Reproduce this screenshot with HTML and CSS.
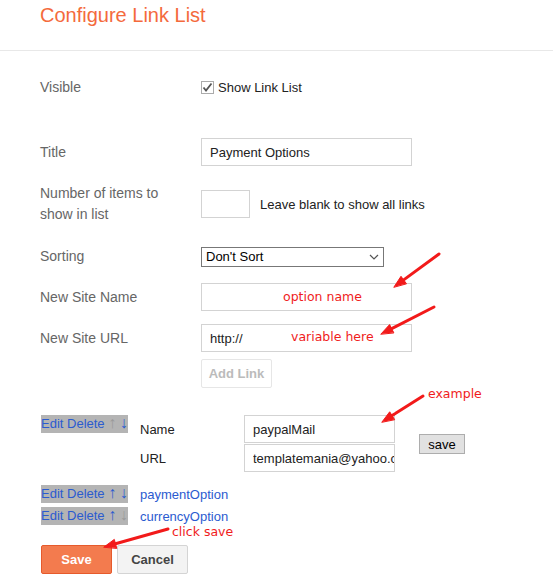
FILE: index.html
```html
<!DOCTYPE html>
<html lang="en">
<head>
    <meta charset="UTF-8" />
    <meta name="viewport" content="width=device-width, initial-scale=1.0"/>
    <title>Configure Link List</title>
    <link rel="stylesheet" href="styles.css">
</head>
<body>
<div class="page">
    <div class="head">
        <h1>Configure Link List</h1>
    </div>

    <div class="form">
        <div class="row row-visible">
            <div class="label">Visible</div>
            <label class="check">
                <span class="box">
                    <svg width="11" height="11" viewBox="0 0 11 11"><path d="M1.5 5.5 L4 8.5 L9.5 1.5" fill="none" stroke="#555" stroke-width="1.8"/></svg>
                </span>
                Show Link List
            </label>
        </div>

        <div class="row row-title">
            <div class="label">Title</div>
            <input type="text" class="field wide" value="Payment Options">
        </div>

        <div class="row row-count">
            <div class="label">Number of items to<br>show in list</div>
            <input type="text" class="field tiny">
            <span class="hint">Leave blank to show all links</span>
        </div>

        <div class="row row-sort">
            <div class="label">Sorting</div>
            <div class="select">
                <span>Don't Sort</span>
                <svg width="10" height="6" viewBox="0 0 10 6"><path d="M1 1 L5 5 L9 1" fill="none" stroke="#555" stroke-width="1.2"/></svg>
            </div>
        </div>

        <div class="row row-name">
            <div class="label">New Site Name</div>
            <input type="text" class="field wide">
        </div>

        <div class="row row-url">
            <div class="label">New Site URL</div>
            <input type="text" class="field wide" value="http://">
        </div>

        <button class="add">Add Link</button>

        <div class="links">
            <div class="link">
                <div class="acts"><span class="sel">Edit Delete <span class="arr dim">↑</span> <span class="arr">↓</span></span></div>
                <div class="fields">
                    <span>Name</span>
                    <input type="text" class="field mid" value="paypalMail">
                    <span>URL</span>
                    <input type="text" class="field mid" value="templatemania@yahoo.com">
                </div>
                <button class="mini">save</button>
            </div>
            <div class="link simple">
                <div class="acts"><span class="sel">Edit Delete <span class="arr">↑</span> <span class="arr">↓</span></span></div>
                <span class="name">paymentOption</span>
            </div>
            <div class="link simple tight">
                <div class="acts"><span class="sel">Edit Delete <span class="arr">↑</span> <span class="arr dim">↓</span></span></div>
                <span class="name">currencyOption</span>
            </div>
        </div>

        <div class="buttons">
            <button class="btn btn-save">Save</button>
            <button class="btn btn-cancel">Cancel</button>
        </div>
    </div>

    <!-- red notes drawn over the form -->
    <span class="note note-name">option name</span>
    <span class="note note-url">variable here</span>
    <span class="note note-example">example</span>
    <span class="note note-save">click save</span>

    <svg class="marks" width="553" height="577" viewBox="0 0 553 577">
        <g stroke="#f21a1a" stroke-width="3" stroke-linecap="round" fill="#f21a1a">
            <line x1="439" y1="254" x2="403.7" y2="279.9"/>
            <polygon points="394,287 401,276.3 406.3,283.5" stroke-width="1"/>
            <line x1="434" y1="307" x2="391.7" y2="328.6"/>
            <polygon points="381,334 389.6,324.6 393.7,332.6" stroke-width="1"/>
            <line x1="423" y1="396" x2="392.1" y2="415.6"/>
            <polygon points="382,422 389.7,411.8 394.5,419.4" stroke-width="1"/>
            <line x1="168" y1="529" x2="115.5" y2="543.7"/>
            <polygon points="104,547 114.3,539.4 116.7,548.1" stroke-width="1"/>
        </g>
    </svg>
</div>
</body>
</html>
```

FILE: styles.css
```css
body {
    margin: 0;
    font-family: "Liberation Sans", Arial, sans-serif;
    color: #222;
    background: #fff;
    overflow: hidden;
}
button, input {
    font-family: inherit;
}
.page {
    position: relative;
    height: 577px;
}
.head {
    height: 50px;
    border-bottom: 1px solid #e8e8e8;
}
.head h1 {
    margin: 0;
    padding: 3px 0 0 40px;
    font-size: 20px;
    line-height: 24px;
    font-weight: normal;
    color: #f46a3c;
}
.form {
    padding-left: 40px;
}
.row {
    display: flex;
    align-items: center;
}
.label {
    width: 161px;
    flex: none;
    font-size: 14px;
    line-height: 21px;
    color: #666;
}
.row-visible {
    margin-top: 30px;
    height: 13px;
}
.check {
    display: flex;
    align-items: center;
    font-size: 13px;
    color: #222;
}
.box {
    width: 13px;
    height: 13px;
    box-sizing: border-box;
    border: 1px solid #ababab;
    margin-right: 4px;
    display: flex;
    align-items: center;
    justify-content: center;
}
.field {
    box-sizing: border-box;
    height: 28px;
    margin: 0;
    padding: 0 0 0 8px;
    border: 1px solid #d3d3d3;
    font-size: 13px;
    color: #222;
    outline: none;
}
.wide {
    width: 211px;
}
.tiny {
    width: 49px;
}
.mid {
    width: 151px;
}
.row-title {
    margin-top: 44px;
}
.row-count {
    margin-top: 17px;
}
.hint {
    margin-left: 10px;
    font-size: 13px;
}
.row-sort {
    margin-top: 21px;
}
.select {
    box-sizing: border-box;
    width: 183px;
    height: 20px;
    border: 1px solid #777;
    padding: 0 4px;
    font-size: 13px;
    color: #000;
    display: flex;
    align-items: center;
    justify-content: space-between;
}
.row-name {
    margin-top: 16px;
}
.row-url {
    margin-top: 13px;
}
.add {
    display: block;
    margin: 7px 0 0 161px;
    width: 71px;
    height: 29px;
    border: 1px solid #e6e6e6;
    border-radius: 2px;
    background: #fff;
    color: #bbb;
    font-size: 13px;
    font-weight: bold;
}
.links {
    margin-top: 27px;
}
.link {
    display: flex;
    align-items: flex-start;
}
.acts {
    width: 100px;
    flex: none;
    display: flex;
}
.sel {
    display: block;
    margin-left: 1px;
    height: 18px;
    background: #b4b4b4;
    line-height: 17px;
    font-size: 13px;
    color: #2b5bd0;
    white-space: nowrap;
}
.arr {
    font-size: 16px;
    line-height: 0;
}
.dim {
    color: #9a9a9a;
}
.fields {
    display: grid;
    grid-template-columns: 104px 151px;
    row-gap: 1px;
    align-items: center;
    font-size: 13px;
}
.mini {
    margin: 19px 0 0 24px;
    width: 46px;
    height: 20px;
    padding: 0;
    background: #e1e1e1;
    border: 1px solid #adadad;
    font-size: 13px;
    color: #000;
}
.simple {
    margin-top: 13px;
    height: 18px;
    align-items: center;
}
.tight {
    margin-top: 4px;
}
.name {
    font-size: 13px;
    color: #2b5bd0;
}
.buttons {
    margin-top: 20px;
    padding-left: 1px;
    display: flex;
    gap: 5px;
}
.btn {
    width: 71px;
    height: 29px;
    border-radius: 2px;
    font-size: 13px;
    font-weight: bold;
}
.btn-save {
    background: #f37b4e;
    border: 1px solid #e65a2c;
    color: #fff;
}
.btn-cancel {
    background: #f3f3f3;
    border: 1px solid #d4d4d4;
    color: #444;
}
.note {
    position: absolute;
    font-family: "DejaVu Sans", Verdana, sans-serif;
    font-size: 12.5px;
    line-height: 16px;
    color: #f01c1c;
}
.note-name {
    left: 283px;
    top: 289px;
}
.note-url {
    left: 291px;
    top: 329px;
}
.note-example {
    left: 428px;
    top: 386px;
}
.note-save {
    left: 172px;
    top: 524px;
}
.marks {
    position: absolute;
    left: 0;
    top: 0;
    pointer-events: none;
}
```
